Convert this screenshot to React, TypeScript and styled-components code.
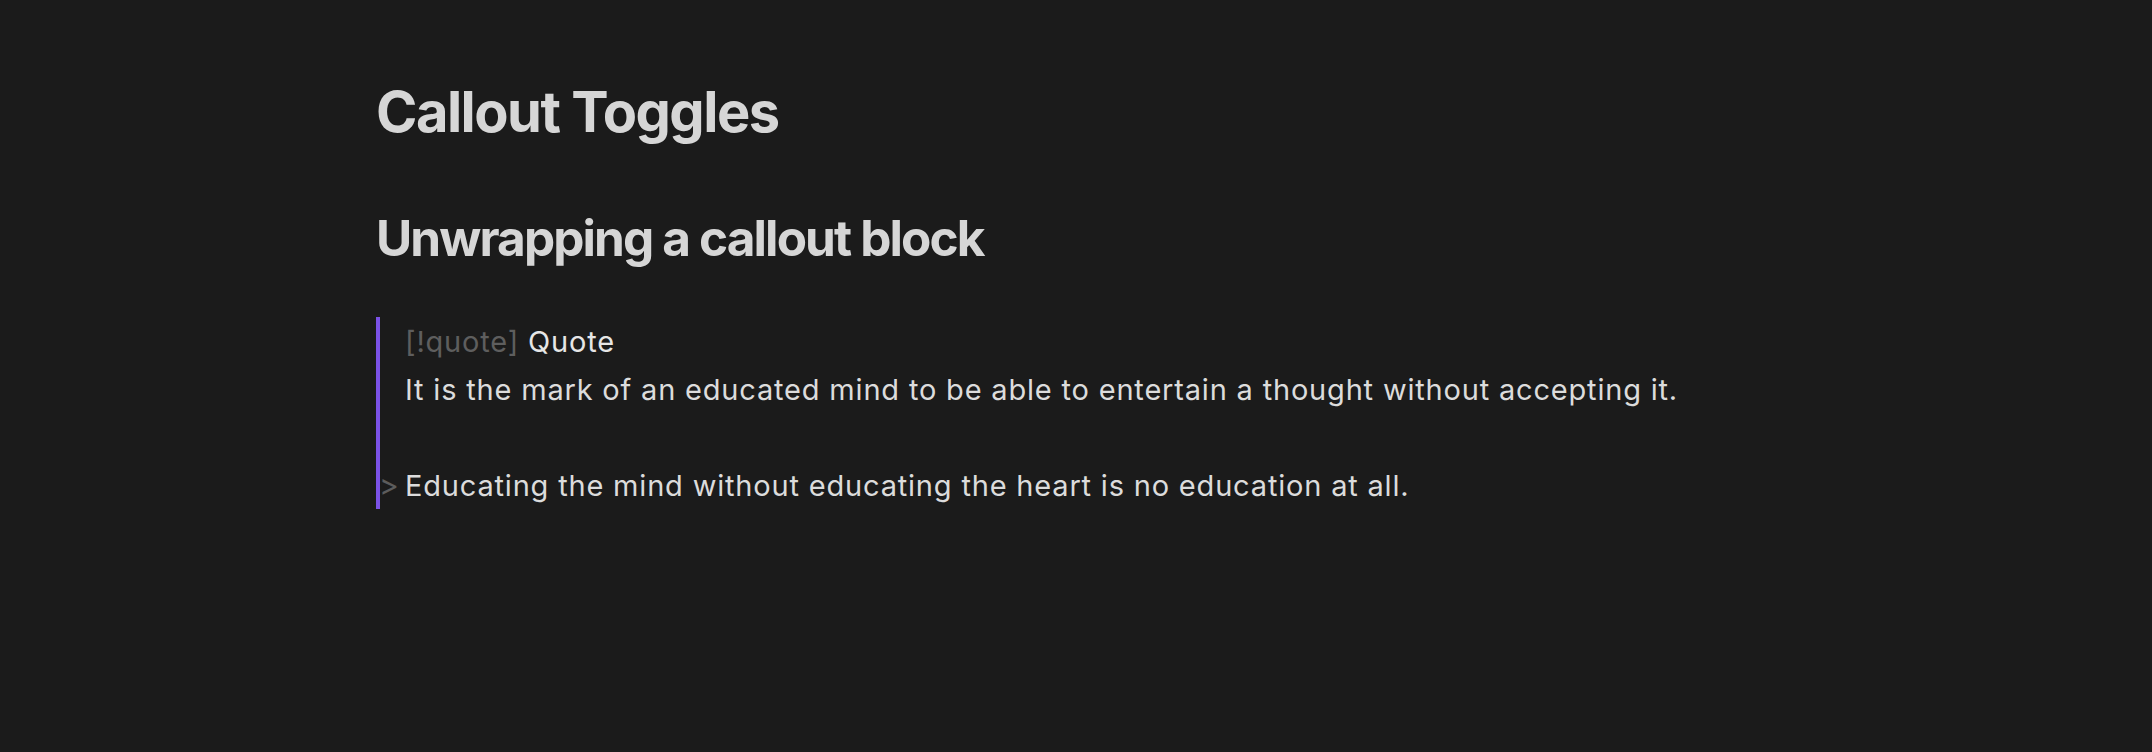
import React from "react";
import styled, { createGlobalStyle } from "styled-components";

const Global = createGlobalStyle`
  html, body { margin: 0; padding: 0; background: #1b1b1b; }
  body { font-family: Inter, "Noto Sans", sans-serif; -webkit-font-smoothing: antialiased; }
`;

const Page = styled.main`
  min-height: 752px;
  background: #1b1b1b;
  padding-top: 79px;
  box-sizing: border-box;
`;

const Column = styled.article`
  max-width: 1400px;
  margin: 0 auto;
`;

const H1 = styled.h1`
  margin: 0;
  font-size: 56px;
  line-height: 1.2;
  font-weight: 700;
  letter-spacing: -0.027em;
  color: #d6d6d6;
`;

const H2 = styled.h2`
  margin: 63px 0 0;
  font-size: 49.5px;
  line-height: 1.2;
  font-weight: 700;
  letter-spacing: -0.038em;
  color: #d6d6d6;
`;

const Callout = styled.blockquote`
  position: relative;
  margin: 48.6px 0 0;
  padding: 1px 0 0 25px;
  border-left: 4px solid #7b52e6;
  font-size: 29px;
  line-height: 48px;
  letter-spacing: 0.028em;
  color: #dcdcdc;
  box-sizing: border-box;
  height: 192px;
`;

const Line = styled.div`
  min-height: 48px;
`;

const Marker = styled.span`
  color: #5e5e5e;
`;

const Title = styled.span`
  color: #e6e6e6;
`;

const Chevron = styled.span`
  position: absolute;
  left: -1px;
  bottom: 0;
  color: #5c5c5c;
  font-size: 30px;
  line-height: 48px;
`;

export default function App() {
  return (
    <>
      <Global />
      <Page>
        <Column>
          <H1>Callout Toggles</H1>
          <H2>Unwrapping a callout block</H2>
          <Callout>
            <Line>
              <Marker>[!quote]</Marker> <Title>Quote</Title>
            </Line>
            <Line>It is the mark of an educated mind to be able to entertain a thought without accepting it.</Line>
            <Line />
            <Line>Educating the mind without educating the heart is no education at all.</Line>
            <Chevron>&gt;</Chevron>
          </Callout>
        </Column>
      </Page>
    </>
  );
}
